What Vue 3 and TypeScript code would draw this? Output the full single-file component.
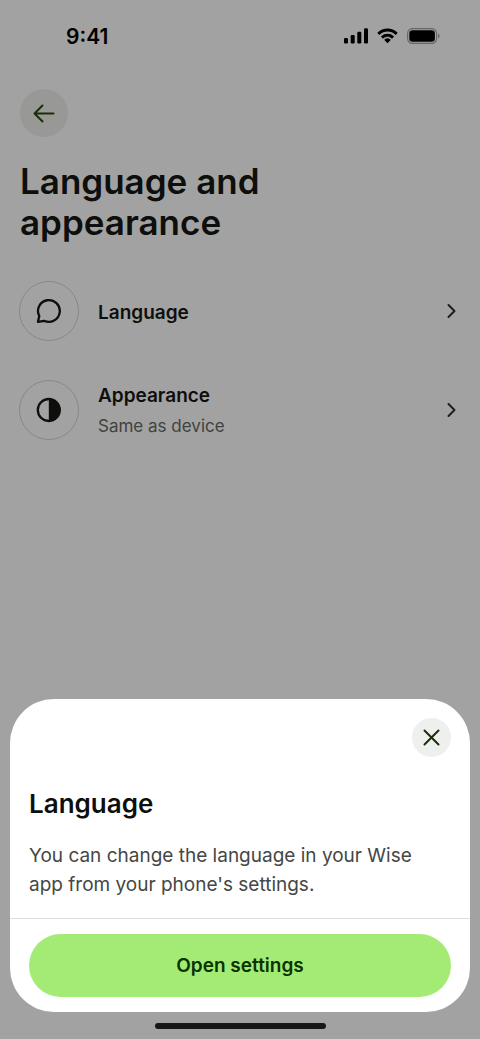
<script setup lang="ts">
import { ref } from 'vue'

interface Setting {
  id: string
  title: string
  detail?: string
}

const settings: Setting[] = [
  { id: 'language', title: 'Language' },
  { id: 'appearance', title: 'Appearance', detail: 'Same as device' },
]

const sheetOpen = ref(true)
</script>

<template>
  <div class="screen">
    <header class="status">
      <span class="time">9:41</span>
      <div class="indicators">
        <svg width="24" height="16" viewBox="0 0 24 16" aria-hidden="true">
          <rect x="0" y="10" width="4" height="5.5" rx="1.2" />
          <rect x="6.7" y="7" width="4" height="8.5" rx="1.2" />
          <rect x="13.3" y="3.8" width="4" height="11.7" rx="1.2" />
          <rect x="20" y="0.3" width="4" height="15.2" rx="1.2" />
        </svg>
        <svg width="21" height="16" viewBox="0 0 20 15" aria-hidden="true">
          <path d="M10 3.3c2.8 0 5.4 1.1 7.4 3 .2.2.4.2.6 0l1.4-1.5c.2-.2.2-.4 0-.6a13.6 13.6 0 0 0-18.8 0c-.2.2-.2.4 0 .6L2 6.3c.2.2.4.2.6 0 2-1.9 4.6-3 7.4-3z" />
          <path d="M10 8.2c1.5 0 2.9.6 4 1.6.2.2.4.2.6 0L16 8.3c.2-.2.2-.4 0-.6a8.8 8.8 0 0 0-12 0c-.2.2-.2.4 0 .6l1.4 1.5c.2.2.4.2.6 0 1.1-1 2.5-1.6 4-1.6z" />
          <path d="M12.8 11.5c.2-.2.2-.4 0-.6a4.3 4.3 0 0 0-5.6 0c-.2.2-.2.4 0 .6l2.5 2.6c.2.2.4.2.6 0z" />
        </svg>
        <svg width="33" height="16" viewBox="0 0 33 16" aria-hidden="true">
          <rect x="0.6" y="0.6" width="29" height="14.8" rx="4.8" fill="none" stroke="#666" stroke-width="1.1" />
          <rect x="2.3" y="2.3" width="25.6" height="11.4" rx="3.3" />
          <path d="M31 5.5c1 .4 1.6 1.4 1.6 2.5S32 10.1 31 10.5z" fill="#686868" />
        </svg>
      </div>
    </header>

    <main class="page">
      <button class="back" type="button" aria-label="Back">
        <svg width="24" height="24" viewBox="0 0 24 24" aria-hidden="true">
          <path d="M21.5 12.5H2.5M10.5 4.5l-8 8 8 8" />
        </svg>
      </button>
      <h1>Language and appearance</h1>

      <ul class="settings">
        <li v-for="item in settings" :key="item.id">
          <button class="row" type="button" @click="sheetOpen = item.id === 'language'">
            <span class="avatar">
              <svg v-if="item.id === 'language'" width="26" height="26" viewBox="0 0 26 26" aria-hidden="true">
                <path
                  d="M1.900 23.900l1.400-5.800A10.900 10.900 0 1 1 8.200 22.800z"
                  fill="none" stroke="#0e0f0c" stroke-width="2.3" stroke-linejoin="round"
                />
              </svg>
              <svg v-else width="26" height="26" viewBox="0 0 26 26" aria-hidden="true">
                <circle cx="12.8" cy="13" r="11" fill="none" stroke="#0e0f0c" stroke-width="2.3" />
                <path d="M12.8 1.5a11.5 11.5 0 0 1 0 23z" fill="#0e0f0c" />
              </svg>
            </span>
            <span class="label">
              <span class="name">{{ item.title }}</span>
              <span v-if="item.detail" class="detail">{{ item.detail }}</span>
            </span>
            <svg class="chevron" width="16" height="16" viewBox="0 0 16 16" aria-hidden="true">
              <path d="M4.5 2l6 6-6 6" />
            </svg>
          </button>
        </li>
      </ul>
    </main>

    <section v-if="sheetOpen" class="sheet" role="dialog" aria-labelledby="sheet-title">
      <div class="content">
        <button class="close" type="button" aria-label="Close" @click="sheetOpen = false">
          <svg width="17" height="17" viewBox="0 0 17 17" aria-hidden="true">
            <path d="M1.500 1.500l14 14M15.500 1.500l-14 14" />
          </svg>
        </button>
        <h2 id="sheet-title">Language</h2>
        <p>You can change the language in your Wise app from your phone's settings.</p>
      </div>
      <footer class="actions">
        <button class="primary" type="button">Open settings</button>
      </footer>
    </section>
    <div class="home-bar"></div>
  </div>
</template>

<style>
body {
  margin: 0;
  background: #a2a2a2;
}
</style>

<style scoped>
.screen {
  min-height: 100vh;
  background: #a2a2a2;
  color: #0e0f0c;
  font-family: Inter, "Liberation Sans", sans-serif;
}
button {
  margin: 0;
  padding: 0;
  border: 0;
  background: none;
  color: inherit;
  font: inherit;
  cursor: pointer;
}
svg {
  display: block;
  flex: none;
}
.status {
  display: flex;
  align-items: center;
  justify-content: space-between;
  height: 72px;
  padding: 0 40px 0 66px;
  color: #000;
}
.time {
  font-size: 21px;
  font-weight: 600;
}
.indicators {
  display: flex;
  align-items: center;
  gap: 9px;
}
.page {
  padding: 17px 20px 0;
}
.back {
  display: flex;
  align-items: center;
  justify-content: center;
  width: 48px;
  height: 48px;
  border-radius: 50%;
  background: #989996;
}
.back path,
.close path,
.chevron path {
  fill: none;
  stroke: #1a2e0b;
  stroke-width: 2;
  stroke-linecap: round;
  stroke-linejoin: round;
}
.chevron path {
  stroke: #1c1e19;
}
h1 {
  max-width: 320px;
  margin: 24px 0 0;
  font-size: 35px;
  line-height: 41px;
  font-weight: 600;
}
.settings {
  display: grid;
  gap: 38px;
  margin: 38px 0 0;
  padding: 0;
  list-style: none;
}
.row {
  display: flex;
  align-items: center;
  gap: 19px;
  width: 100%;
  text-align: left;
}
.avatar {
  display: flex;
  align-items: center;
  justify-content: center;
  box-sizing: border-box;
  flex: none;
  width: 60px;
  height: 60px;
  margin-left: -1px;
  border: 1px solid #878787;
  border-radius: 50%;
}
.label {
  display: grid;
  flex: 1;
  gap: 2px;
  padding-top: 2px;
}
.name,
.detail {
  line-height: 29px;
}
.name {
  font-size: 19px;
  font-weight: 600;
}
.detail {
  color: #404240;
  font-size: 17px;
}
.sheet {
  position: fixed;
  right: 10px;
  bottom: 27px;
  left: 10px;
  border-radius: 44px;
  background: #fff;
}
.content {
  display: flex;
  flex-direction: column;
  padding: 19px;
}
.close {
  display: flex;
  align-items: center;
  justify-content: center;
  align-self: flex-end;
  width: 39px;
  height: 39px;
  border-radius: 50%;
  background: #eef0ed;
}
h2 {
  margin: 30px 0 0;
  font-size: 26px;
  line-height: 34px;
  font-weight: 600;
}
p {
  margin: 20px 0 0;
  color: #454745;
  font-size: 19px;
  line-height: 29px;
}
.actions {
  padding: 15px 19px;
  border-top: 1px solid #dedfdd;
}
.primary {
  width: 100%;
  height: 63px;
  border-radius: 32px;
  background: #a3eb75;
  color: #0b3300;
  font-size: 19px;
  font-weight: 600;
}
.home-bar {
  position: fixed;
  right: 0;
  bottom: 10px;
  left: 0;
  width: 171px;
  height: 6px;
  margin: 0 auto;
  border-radius: 3px;
  background: #171717;
}
</style>
